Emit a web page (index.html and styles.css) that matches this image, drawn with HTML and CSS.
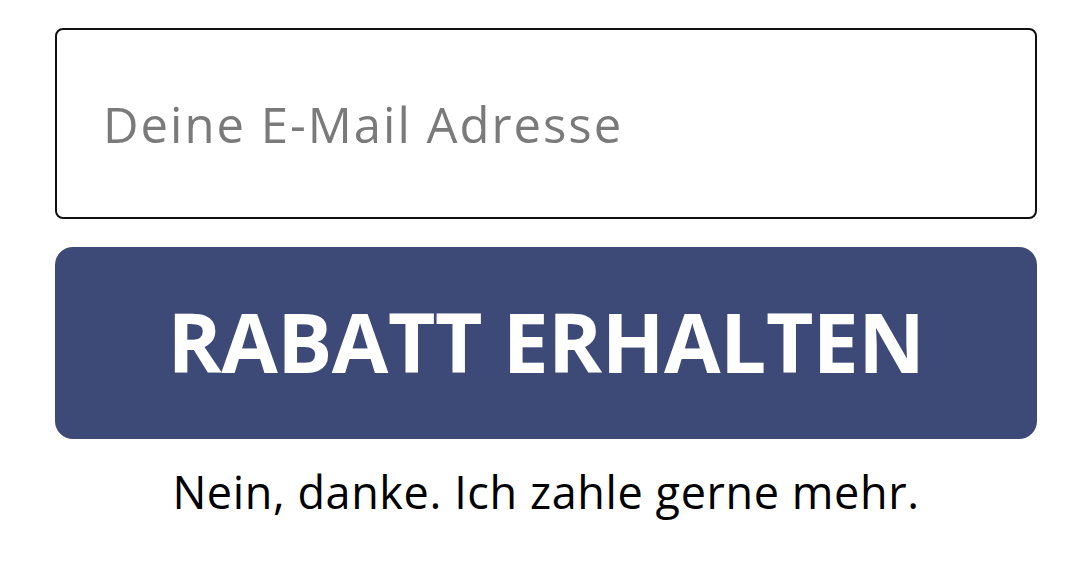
FILE: index.html
```html
<!DOCTYPE html>
<html lang="de">
<head>
    <meta charset="UTF-8">
    <meta name="viewport" content="width=device-width, initial-scale=1.0">
    <title>Rabatt</title>
    <link rel="stylesheet" href="styles.css">
</head>
<body>
    <form class="signup" onsubmit="return false;">
        <input type="email" class="email" placeholder="Deine E-Mail Adresse">
        <button class="submit">RABATT ERHALTEN</button>
        <a href="#" class="decline">Nein, danke. Ich zahle gerne mehr.</a>
    </form>
</body>
</html>
```

FILE: styles.css
```css
body {
    font-family: 'Open Sans', 'Liberation Sans', sans-serif;
    margin: 0;
    padding: 0;
    background-color: #fff;
}

.signup {
    display: flex;
    flex-direction: column;
    width: 982px;
    padding: 28px 0 0 55px;
}

.email {
    box-sizing: border-box;
    height: 191px;
    padding: 0 46px;
    border: 2px solid #111;
    border-radius: 8px;
    font-family: inherit;
    font-size: 49px;
    letter-spacing: 2px;
    color: #222;
    outline: none;
}

.email::placeholder {
    color: #7a7a7a;
}

.submit {
    height: 192px;
    margin-top: 28px;
    padding-bottom: 6px;
    border: none;
    border-radius: 18px;
    background-color: #3d4a78;
    color: #fff;
    font-family: inherit;
    font-size: 82px;
    font-weight: 700;
    letter-spacing: -0.5px;
    cursor: pointer;
}

.decline {
    margin-top: 22px;
    text-align: center;
    color: #000;
    font-size: 45px;
    letter-spacing: 0.6px;
    text-decoration: none;
}
```
